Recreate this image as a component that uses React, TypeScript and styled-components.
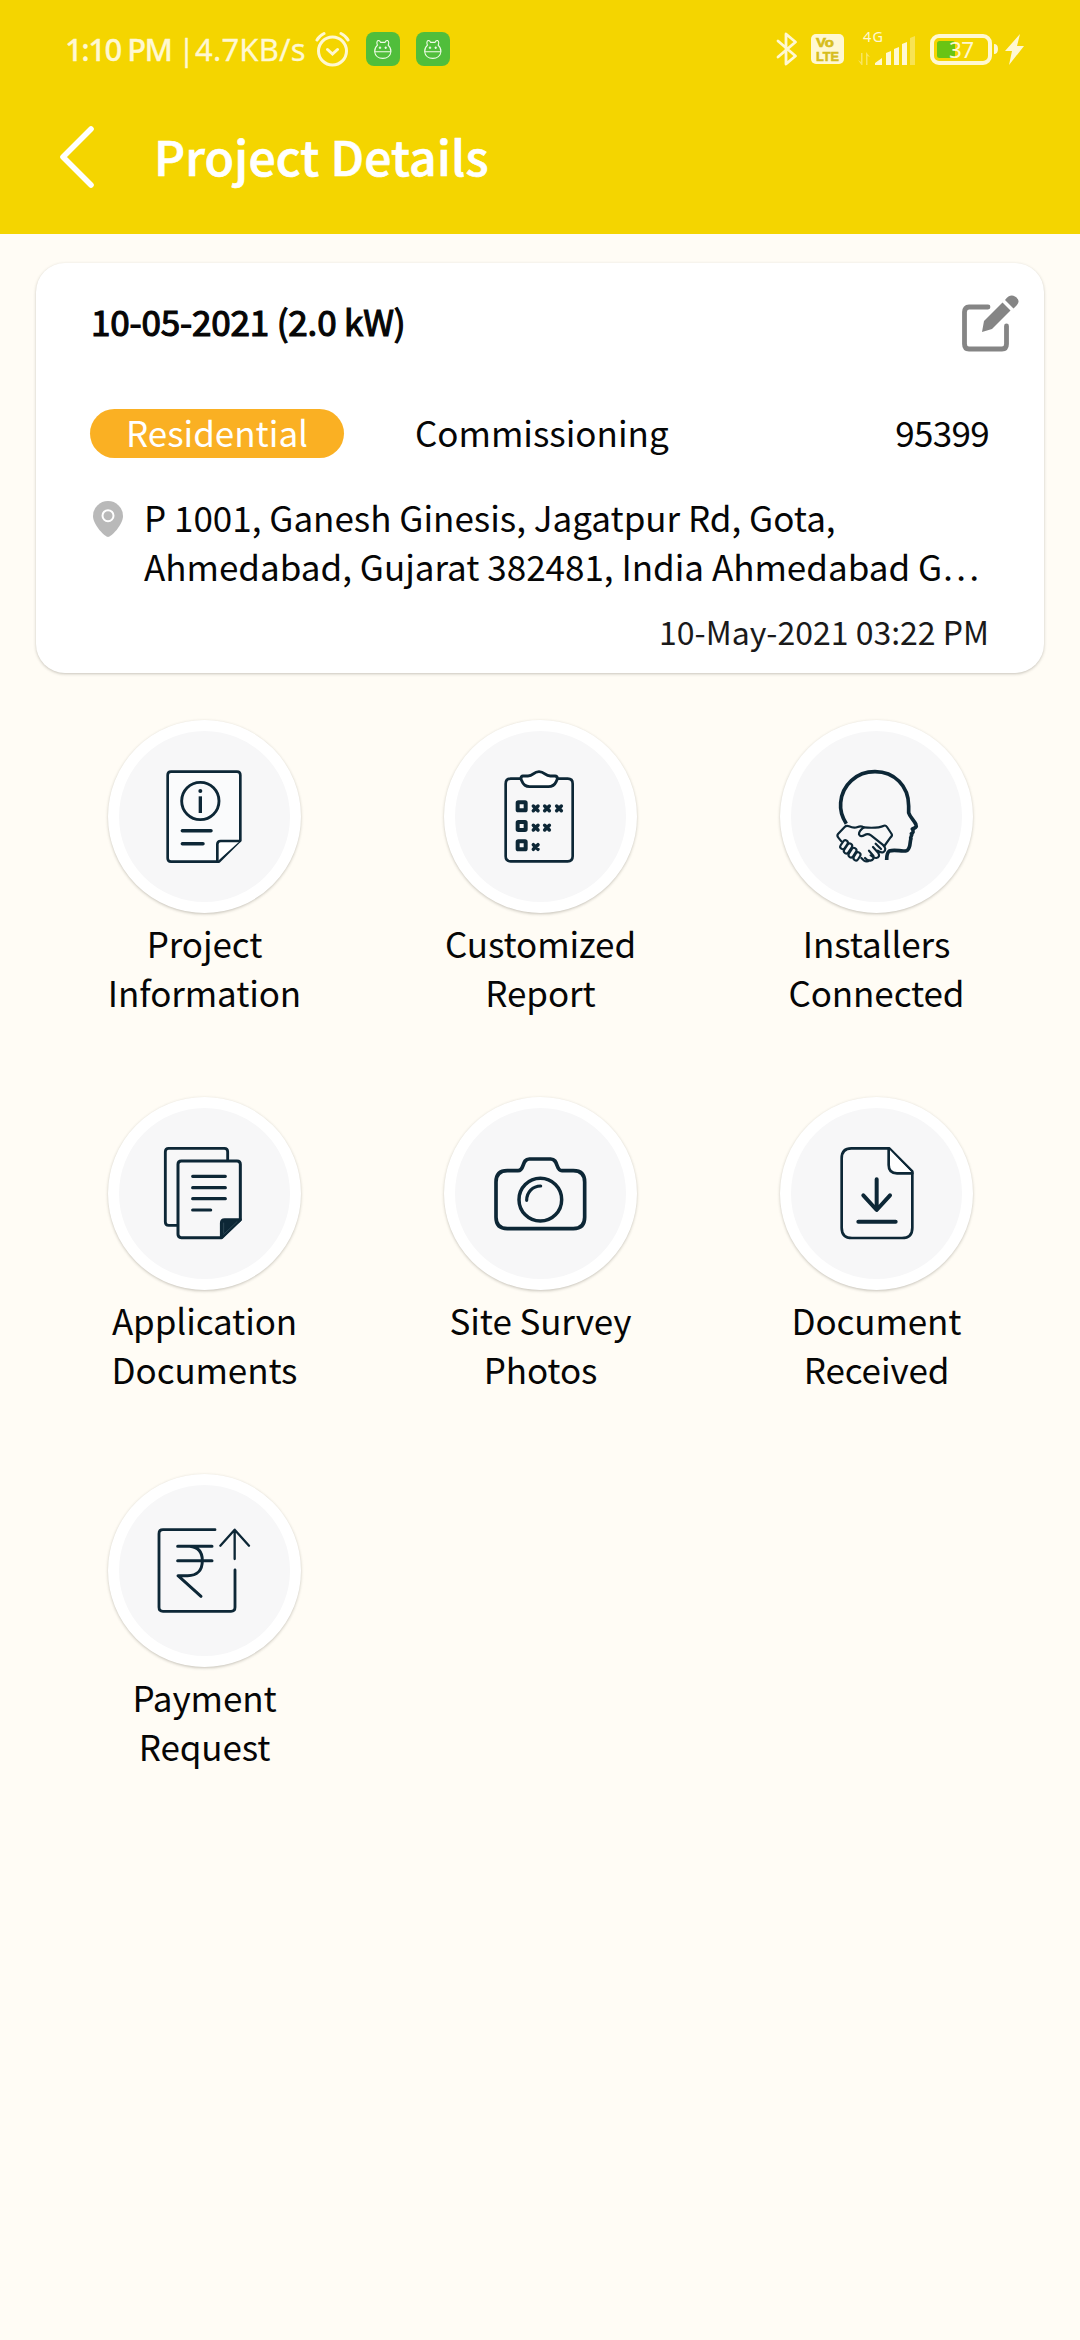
import React from "react";
import styled, { createGlobalStyle } from "styled-components";

const INK = "#0d2736";
const PALE = "#fff8d2";
const DISC = "#f7f7f8";

const GlobalStyle = createGlobalStyle`
  * { box-sizing: border-box; }
  body {
    margin: 0;
    background: #fffcf5;
    color: #060606;
    font-family: "Noto Sans CJK SC", "Noto Sans", sans-serif;
    font-size: 35px;
    line-height: 49px;
  }
`;

const Screen = styled.div`
  width: 1080px;
  min-height: 2340px;
  background: #fffcf5;
`;

const Header = styled.header`
  height: 234px;
  background: #f4d500;
`;

const StatusBar = styled.div`
  height: 98px;
  padding: 0 55px 0 65px;
  display: flex;
  align-items: center;
  justify-content: space-between;
`;

const StatusGroup = styled.div`
  display: flex;
  align-items: center;
`;

const StatusText = styled.span<{ $width: number; $weight?: number; $spacing?: number }>`
  width: ${(p) => p.$width}px;
  font-family: "Noto Sans", sans-serif;
  font-size: 31px;
  line-height: 42px;
  white-space: nowrap;
  color: ${PALE};
  font-weight: ${(p) => p.$weight ?? 400};
  letter-spacing: ${(p) => p.$spacing ?? 0}px;
  -webkit-text-stroke: 0.3px ${PALE};
`;

const StatusIcon = styled.svg<{ $left?: number }>`
  display: block;
  flex: none;
  margin-left: ${(p) => p.$left ?? 0}px;
`;

const TitleBar = styled.div`
  height: 118px;
  padding-left: 56px;
  display: flex;
  align-items: center;
`;

const BackButton = styled.button`
  width: 98px;
  height: 70px;
  padding: 0;
  border: 0;
  background: none;
  display: flex;
  justify-content: flex-start;
`;

const Title = styled.h1`
  margin: 0;
  padding-bottom: 4px;
  font-size: 48px;
  line-height: 70px;
  font-weight: 500;
  letter-spacing: 0.2px;
  color: #fff;
  white-space: nowrap;
  -webkit-text-stroke: 0.7px #fff;
`;

const Card = styled.section`
  margin: 29px 36px 0;
  height: 410px;
  padding: 32px 55px 0 54px;
  border-radius: 29px;
  background: #fff;
  box-shadow: 0 1px 3px rgba(70, 65, 50, 0.3);
`;

const CardTop = styled.div`
  display: flex;
  justify-content: space-between;
  height: 114px;
  margin-right: -31px;
`;

const CardTitle = styled.div`
  padding: 1px 0 0 1px;
  letter-spacing: -0.17px;
  -webkit-text-stroke: 1.2px #060606;
`;

const Facts = styled.div`
  display: flex;
  height: 49px;
  line-height: 45px;
`;

const Pill = styled.span`
  width: 254px;
  height: 49px;
  border-radius: 25px;
  background: #fab023;
  color: #fff;
  text-align: center;
`;

const Stage = styled.span`
  flex: 1;
  padding-left: 71px;
`;

const ProjectId = styled.span`
  letter-spacing: -0.7px;
`;

const Place = styled.div`
  display: flex;
  margin-top: 34px;
`;

const PinSlot = styled.div`
  width: 54px;
  padding: 9px 0 0 3px;
`;

const PinIcon = styled.svg`
  display: block;
`;

const Address = styled.div`
  white-space: nowrap;
`;

const Stamp = styled.div`
  margin-top: 19px;
  font-size: 32px;
  line-height: 45px;
  text-align: right;
  color: #1a1a1a;
`;

const Grid = styled.main`
  margin: 47px 36px 0;
  display: grid;
  grid-template-columns: repeat(3, 336px);
  grid-auto-rows: 377px;
`;

const Tile = styled.div`
  display: flex;
  flex-direction: column;
  align-items: center;
`;

const Disc = styled.div`
  width: 193px;
  height: 193px;
  border: 11px solid #fff;
  border-radius: 50%;
  background: ${DISC};
  box-shadow: 0 1px 3px rgba(70, 65, 50, 0.3);
  display: flex;
  align-items: center;
  justify-content: center;
`;

const Glyph = styled.svg`
  display: block;
  width: 96px;
  height: 96px;
  margin: 0 1px 1px 0;
  fill: none;
  stroke: ${INK};
  stroke-width: 8.6px;
  stroke-linecap: round;
  stroke-linejoin: round;
`;

const Label = styled.div`
  margin-top: 5px;
  padding-left: 1px;
  letter-spacing: -0.1px;
  text-align: center;
  white-space: pre-line;
`;

const CatBadge = ({ left }: { left: number }) => (
  <StatusIcon $left={left} width="34" height="34" viewBox="0 0 34 34" fill="none" stroke="#f2fbe9" strokeWidth="1.1">
    <rect width="34" height="34" rx="8" fill="#50be3b" stroke="none" />
    <path d="M11.5 13.2C10.6 11.5 10.6 9.3 12 8.6C13.3 8.2 14.2 9.4 14.6 10.4H19C19.4 9.4 20.3 8.2 21.6 8.6C23 9.3 23 11.5 22.1 13.2C24.3 15.2 25.1 17.3 24.9 19.8C24.5 24 21 26.4 16.8 26.4C12.6 26.4 9 24 8.7 19.8C8.5 17.3 9.3 15.2 11.5 13.2Z" />
    <path d="M8.7 19.7H24.9M14 14.5V17M19.7 14.5V17" />
    <path d="M12.8 15.8H15.2M18.5 15.8H20.9" />
  </StatusIcon>
);

const fingers = "M254 428L246 440M267 438L257 453M280 451L271 465M292 464L286 474";

const icons: Record<string, React.ReactNode> = {
  info: (
    <Glyph viewBox="197 204 288 288">
      <path strokeWidth="8" fill="#fbfdff" fillOpacity=".6" d="M242 215H440Q450 215 450 225V421L386 485H242Q232 485 232 475V225Q232 215 242 215Z" />
      <path strokeWidth="8" fill="#fff" d="M381 484V433Q381 423 391 423H449" />
      <circle cx="330" cy="303" r="56" />
      <path strokeWidth="10" strokeLinecap="butt" d="M330 289V339" />
      <circle cx="330" cy="273" r="6" fill={INK} stroke="none" />
      <path strokeWidth="10.5" d="M276 392H362M276 431H338" />
    </Glyph>
  ),
  report: (
    <Glyph viewBox="184 204 288 288">
      <path strokeWidth="8" d="M270 236H240Q225 236 225 251V469Q225 484 240 484H411Q426 484 426 469V251Q426 236 411 236H382" />
      <path fill="#fff" d="M277 228H292C309 228 307 215 325 215C343 215 342 228 359 228H373C383 229 380 239 377 244C372 255 366 260 353 260H297C284 260 278 255 274 244C270 237 269 229 277 228Z" />
      {[319, 378, 436].map((y) => (
        <rect key={y} x="261" y={y - 12} width="24" height="24" rx="2" strokeWidth="12" />
      ))}
      {[[315, 325], [349, 325], [385, 325], [315, 383], [349, 383], [315, 441]].map(([x, y]) => (
        <path key={`${x}-${y}`} strokeWidth="10.5" d={`M${x - 7} ${y - 7}L${x + 7} ${y + 7}M${x + 7} ${y - 7}L${x - 7} ${y + 7}`} />
      ))}
    </Glyph>
  ),
  installers: (
    <Glyph viewBox="202 204 288 288">
      <path strokeWidth="11" strokeLinecap="butt" d="M257 371C243 350 238 330 240 308C244 255 287 215 343 215C401 215 444 258 444 318V338C448 352 462 362 466 374C469 381 463 384 455 387C460 394 457 399 452 401C457 406 447 410 451 416C447 422 451 443 440 451C425 458 406 446 386 453C378 458 378 468 378 480" />
      <g strokeWidth="6.5">
        <path d="M242 424L233 413Q228 407 232 402L252 381Q257 376 265 379Q280 386 291 381Q301 377 309 382" />
        <path d="M309 382Q294 394 295 403Q299 413 312 405Q321 399 331 406L366 434Q380 447 369 456Q360 460 351 452" />
        <path d="M309 382C330 384 350 386 370 377Q375 375 379 381L393 402Q396 407 389 413L371 438" />
        <path d="M337 441L353 459Q359 472 347 474Q339 475 330 466M325 452L338 467Q342 479 329 482Q321 483 313 474M345 431L361 447M302 474L309 481Q319 488 326 481" />
      </g>
      <path strokeWidth="21" d={fingers} />
      <path strokeWidth="8.5" stroke={DISC} d={fingers} />
    </Glyph>
  ),
  documents: (
    <Glyph viewBox="197 196 288 288">
      <path strokeWidth="8.5" d="M260 437H235Q225 437 225 427V216Q225 206 235 206H402Q412 206 412 216V240" />
      <path strokeWidth="9" d="M273 244H440Q450 244 450 254V420L394 474H273Q263 474 263 464V254Q263 244 273 244Z" />
      <path fill={INK} d="M393 473V430Q393 420 403 420H450Z" />
      <path stroke="#6e8490" strokeWidth="1" d="M400 464L440 426M400 430V460" />
      <path strokeWidth="9.5" d="M307 290H405M307 324H405M307 357H405M307 391H361" />
    </Glyph>
  ),
  camera: (
    <Glyph viewBox="184 196 288 288">
      <path strokeWidth="11" d="M230 273H262C283 273 272 238 296 238H360C384 238 374 273 394 273H428Q462 273 462 307V413Q462 447 428 447H230Q196 447 196 413V307Q196 273 230 273Z" />
      <circle cx="329" cy="360" r="64" strokeWidth="10.5" />
      <path strokeWidth="9.5" d="M288 362C288 338 306 319 330 319" />
    </Glyph>
  ),
  received: (
    <Glyph viewBox="202 196 288 288">
      <path strokeWidth="8" d="M272 206H386L455 275V444Q455 475 424 475H274Q243 475 243 444V236Q243 206 272 206Z" />
      <path strokeWidth="8" fill="#fff" d="M384 207V256Q384 281 409 281H455" />
      <path strokeWidth="12" d="M348 299V390M308 347L348 391L388 347M293 426H405" />
    </Glyph>
  ),
  payment: (
    <Glyph viewBox="197 187 288 288">
      <path strokeWidth="8.5" d="M374 210H218Q206 210 206 222V443Q206 455 218 455H422Q434 455 434 443V331" />
      <path strokeWidth="7" d="M433 298V211M390 258L433 210L476 258" />
      <path strokeWidth="9" d="M262 260H365M262 303H365M298 260C324 262 336 278 336 303C336 332 320 348 292 348H263L332 410" />
    </Glyph>
  ),
};

const tiles = [
  { icon: "info", label: "Project\nInformation" },
  { icon: "report", label: "Customized\nReport" },
  { icon: "installers", label: "Installers\nConnected" },
  { icon: "documents", label: "Application\nDocuments" },
  { icon: "camera", label: "Site Survey\nPhotos" },
  { icon: "received", label: "Document\nReceived" },
  { icon: "payment", label: "Payment\nRequest" },
];

export default function App() {
  return (
    <Screen>
      <GlobalStyle />
      <Header>
        <StatusBar>
          <StatusGroup>
            <StatusText $width={113} $weight={500} $spacing={-1.5}>1:10 PM</StatusText>
            <StatusText $width={17}>|</StatusText>
            <StatusText $width={111} $spacing={0.2}>4.7KB/s</StatusText>
            <StatusIcon $left={9} width="35" height="36" viewBox="0 0 35 36" fill="none" stroke={PALE} strokeWidth="3" strokeLinecap="round">
              <circle cx="17.5" cy="20" r="14" />
              <path d="M12.5 18.5L17.5 23L22.5 18.5M2 9Q4 5 9 2.5M33 9Q31 5 26 2.5" />
            </StatusIcon>
            <CatBadge left={16} />
            <CatBadge left={16} />
          </StatusGroup>
          <StatusGroup>
            <StatusIcon width="22" height="36" viewBox="0 0 22 36" fill="none" stroke={PALE} strokeWidth="2.8" strokeLinejoin="round" strokeLinecap="round">
              <path d="M2 10L19.5 25L10 33V3L19.5 11L2 26" />
            </StatusIcon>
            <StatusIcon $left={13} width="34" height="30" viewBox="0 0 34 30">
              <rect width="33" height="30" rx="5" fill={PALE} />
              <g fill="#d6bd1c" stroke="#d6bd1c" strokeWidth=".6" fontFamily="Liberation Sans, sans-serif" fontWeight="700" fontSize="12.5">
                <text x="5" y="12.5" textLength="18" lengthAdjust="spacingAndGlyphs">Vo</text>
                <text x="5" y="27" textLength="23" lengthAdjust="spacingAndGlyphs">LTE</text>
              </g>
            </StatusIcon>
            <StatusIcon $left={13} width="60" height="48" viewBox="0 -6 60 48" fill={PALE}>
              <text x="5" y="11" fontFamily="Noto Sans, sans-serif" fontSize="14.5" textLength="20">4G</text>
              <path opacity=".45" d="M3 22H4.500V34H3.500L0 29L3 31ZM8 34V21L12 26L9.500 25V34Z" />
              <path d="M17 34V32L24 27V34ZM28 34V22L33 20V34ZM36 34V18L41 16V34ZM44 34V13L49 11V34Z" />
              <path opacity=".4" d="M52 34V7L57 5V34Z" />
            </StatusIcon>
            <StatusIcon $left={12} width="70" height="31" viewBox="0 0 70 31">
              <rect x="2" y="2" width="58" height="27" rx="7" fill="none" stroke={PALE} strokeWidth="4" />
              <path fill={PALE} d="M64 10Q68 10 68 15T64 20Z" />
              <rect x="7" y="7" width="18" height="17" rx="2.5" fill="#69c414" />
              <text x="19" y="24" fill={PALE} fontFamily="Noto Sans, sans-serif" fontSize="22.5" textLength="25">37</text>
            </StatusIcon>
            <StatusIcon $left={5} width="20" height="31" viewBox="0 0 20 31" fill={PALE}>
              <path d="M15 0L0 17H7L4 31L19 12H12Z" />
            </StatusIcon>
          </StatusGroup>
        </StatusBar>
        <TitleBar>
          <BackButton aria-label="Back">
            <svg width="44" height="70" viewBox="0 0 44 70" fill="none" stroke="#fff" strokeWidth="5.600" strokeLinecap="round" strokeLinejoin="round">
              <path d="M35 7L7 35L35 63" />
            </svg>
          </BackButton>
          <Title>Project Details</Title>
        </TitleBar>
      </Header>

      <Card>
        <CardTop>
          <CardTitle>10-05-2021 (2.0 kW)</CardTitle>
          <svg width="58" height="58" viewBox="0 0 58 58" fill="none" stroke="#858585" strokeWidth="4.8" strokeLinecap="round">
            <path d="M26 12H7Q2.500 12 2.500 17V49Q2.500 54 7 54H40Q44.500 54 44.500 49V31" />
            <path stroke="none" fill="#858585" d="M20 37L22 26L40.500 7.500L48.500 15.500L30 34ZM43 5Q48 -1.500 53 1.500Q59 5 55 10L51.500 13.500Z" />
          </svg>
        </CardTop>
        <Facts>
          <Pill>Residential</Pill>
          <Stage>Commissioning</Stage>
          <ProjectId>95399</ProjectId>
        </Facts>
        <Place>
          <PinSlot>
            <PinIcon width="30" height="36" viewBox="0 0 30 36">
              <path fill="#b9b9b9" d="M15 36C12 36 0 24 0 15A15 15 0 0 1 30 15C30 24 18 36 15 36Z" />
              <circle cx="15" cy="14.7" r="5.5" fill="none" stroke="#fff" strokeWidth="2" />
            </PinIcon>
          </PinSlot>
          <Address>
            P 1001, Ganesh Ginesis, Jagatpur Rd, Gota,
            <br />
            Ahmedabad, Gujarat 382481, India Ahmedabad G…
          </Address>
        </Place>
        <Stamp>10-May-2021 03:22 PM</Stamp>
      </Card>

      <Grid>
        {tiles.map((t) => (
          <Tile key={t.icon}>
            <Disc>{icons[t.icon]}</Disc>
            <Label>{t.label}</Label>
          </Tile>
        ))}
      </Grid>
    </Screen>
  );
}
